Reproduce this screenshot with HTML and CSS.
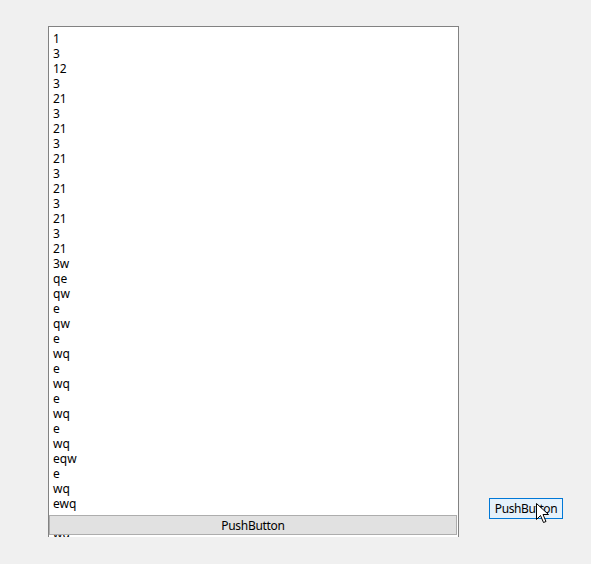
FILE: index.html
```html
<!DOCTYPE html>
<html>
<head>
<meta charset="utf-8">
<link rel="stylesheet" href="styles.css">
</head>
<body>
<div class="window">
  <div class="listbox">
    <ul class="items">
      <li>1</li><li>3</li><li>12</li><li>3</li><li>21</li><li>3</li><li>21</li><li>3</li><li>21</li><li>3</li><li>21</li><li>3</li><li>21</li><li>3</li><li>21</li><li>3w</li><li>qe</li><li>qw</li><li>e</li><li>qw</li><li>e</li><li>wq</li><li>e</li><li>wq</li><li>e</li><li>wq</li><li>e</li><li>wq</li><li>eqw</li><li>e</li><li>wq</li><li>ewq</li><li>e</li><li>wq</li>
    </ul>
    <button class="inner-btn">PushButton</button>
  </div>
  <div class="side">
    <button class="side-btn">PushButton</button>
    <svg class="cursor" width="13" height="21" viewBox="0 0 13 21">
      <path d="M0.5 0.5 L0.5 16.5 L4.5 12.5 L7.5 19.5 L10 18.5 L7 11.5 L12.5 11.5 Z" fill="#fff" stroke="#000" stroke-width="1" stroke-linejoin="miter"/>
    </svg>
  </div>
</div>
</body>
</html>
```

FILE: styles.css
```css
html, body {
  margin: 0;
  padding: 0;
  background: #f0f0f0;
}
body {
  width: 591px;
  height: 564px;
  overflow: hidden;
  font-family: "Segoe UI", "Noto Sans", "Open Sans", sans-serif;
  font-size: 12px;
  color: #000;
}
.window {
  display: flex;
  align-items: flex-start;
  padding: 26px 0 0 48px;
}
.listbox {
  position: relative;
  width: 409px;
  height: 510px;
  border: 1px solid #828282;
  border-bottom: none;
  background: #fff;
  overflow: hidden;
}
.items {
  list-style: none;
  margin: 0;
  padding: 4px 0 0 4px;
}
.items li {
  height: 15px;
  line-height: 15px;
  white-space: nowrap;
}
.inner-btn {
  position: absolute;
  left: 0;
  right: 1px;
  top: 488px;
  height: 20px;
  margin: 0;
  padding: 0;
  border: 1px solid #adadad;
  background: #e1e1e1;
  font: inherit;
  letter-spacing: -0.3px;
  color: #000;
}
.side {
  position: relative;
  margin: 472px 0 0 30px;
}
.side-btn {
  display: block;
  width: 74px;
  height: 21px;
  margin: 0;
  padding: 0 0 1px 0;
  border: 1px solid #0078d7;
  background: #e5f1fb;
  font: inherit;
  letter-spacing: -0.4px;
  color: #000;
}
.cursor {
  position: absolute;
  left: 47px;
  top: 5px;
}
```
